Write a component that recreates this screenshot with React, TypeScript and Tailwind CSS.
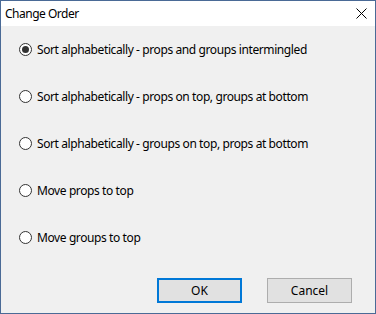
import React from "react";

const options = [
  "Sort alphabetically - props and groups intermingled",
  "Sort alphabetically - props on top, groups at bottom",
  "Sort alphabetically - groups on top, props at bottom",
  "Move props to top",
  "Move groups to top",
];

function Radio({ checked }: { checked: boolean }) {
  return (
    <div className="w-[13px] h-[13px] rounded-full border border-[#333333] bg-white flex items-center justify-center shrink-0">
      {checked && <div className="w-[7px] h-[7px] rounded-full bg-[#333333]" />}
    </div>
  );
}

export default function App() {
  return (
    <div
      className="w-[376px] h-[314px] border border-[#4a6a96] bg-[#f0f0f0] flex flex-col text-[12px] text-black"
      style={{ fontFamily: '"Noto Sans", "Open Sans", sans-serif' }}
    >
      <div className="h-[25px] bg-white flex items-center justify-between pl-[4px] pr-[7px] shrink-0">
        <span className="leading-none tracking-[-0.5px]">Change Order</span>
        <svg width="11" height="11" viewBox="0 0 11 11" className="mr-[1px]">
          <path d="M0.5 0.5 L10.5 10.5 M10.5 0.5 L0.5 10.5" stroke="#000" strokeWidth="1" />
        </svg>
      </div>
      <div className="flex-1 flex flex-col pl-[18px] pt-[17px]">
        {options.map((o, i) => (
          <div key={i} className="flex items-center gap-[5px] h-[13px] mb-[34px]">
            <Radio checked={i === 0} />
            <span className="leading-none whitespace-nowrap tracking-[-0.4px]">{o}</span>
          </div>
        ))}
      </div>
      <div className="flex justify-end gap-[25px] pr-[23px] pb-[14px]">
        <button className="w-[85px] h-[25px] border-2 border-[#0078d7] bg-[#e1e1e1] leading-none">OK</button>
        <button className="w-[85px] h-[25px] border border-[#adadad] bg-[#e1e1e1] leading-none">Cancel</button>
      </div>
    </div>
  );
}
